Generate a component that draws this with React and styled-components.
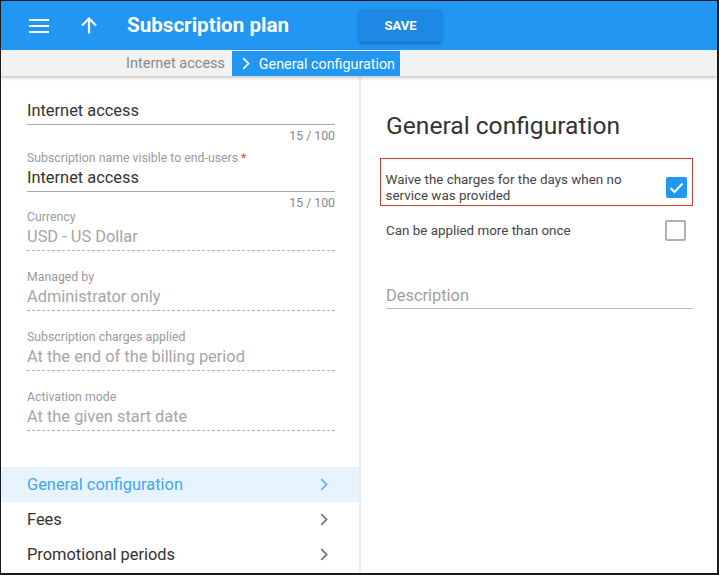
import React from 'react';
import styled, { createGlobalStyle } from 'styled-components';

const GlobalStyle = createGlobalStyle`
  html, body {
    margin: 0;
    padding: 0;
    background: #1b1b1b;
  }
  * { box-sizing: border-box; }
`;

const fields = [
  { label: 'Currency', value: 'USD - US Dollar' },
  { label: 'Managed by', value: 'Administrator only' },
  { label: 'Subscription charges applied', value: 'At the end of the billing period' },
  { label: 'Activation mode', value: 'At the given start date' },
];

const sections = ['General configuration', 'Fees', 'Promotional periods'];

const MenuIcon = () => (
  <svg width="20" height="14" viewBox="0 0 20 14">
    <rect x="0" y="0" width="20" height="2" fill="#fff" />
    <rect x="0" y="6" width="20" height="2" fill="#fff" />
    <rect x="0" y="12" width="20" height="2" fill="#fff" />
  </svg>
);

const UpIcon = () => (
  <svg width="18" height="17" viewBox="0 0 18 17">
    <path d="M9 16.5V2 M2 8.5 L9 1.5 L16 8.5" stroke="#fff" strokeWidth="2.2" fill="none" />
  </svg>
);

const Chevron = ({ color = '#757575', size = 12 }) => (
  <svg width={size * 0.6} height={size} viewBox="0 0 7 12">
    <path d="M1 1 L6 6 L1 11" stroke={color} strokeWidth="1.6" fill="none" />
  </svg>
);

const Check = () => (
  <svg width="15" height="12" viewBox="0 0 15 12">
    <path d="M1.5 6 L5.5 10 L13.5 1.5" stroke="#fff" strokeWidth="2" fill="none" />
  </svg>
);

const App = () => {
  return (
    <>
      <GlobalStyle />
      <Frame>
        <Header>
          <IconButton><MenuIcon /></IconButton>
          <IconButton up><UpIcon /></IconButton>
          <Title>Subscription plan</Title>
          <SaveButton>SAVE</SaveButton>
        </Header>
        <Breadcrumbs>
          <Crumb>Internet access</Crumb>
          <CurrentCrumb>
            <Chevron color="#fff" size={13} />
            General configuration
          </CurrentCrumb>
        </Breadcrumbs>
        <Body>
          <LeftPanel>
            <Form>
              <TextField first>
                <Value>Internet access</Value>
              </TextField>
              <Counter>15 / 100</Counter>
              <TextField>
                <Label>Subscription name visible to end-users <Req>*</Req></Label>
                <Value>Internet access</Value>
              </TextField>
              <Counter>15 / 100</Counter>
              {fields.map((f, i) => (
                <SelectField key={f.label} first={i === 0}>
                  <Label>{f.label}</Label>
                  <Value disabled>{f.value}</Value>
                </SelectField>
              ))}
            </Form>
            <Nav>
              {sections.map((s, i) => (
                <NavItem key={s} active={i === 0}>
                  {s}
                  <Chevron color={i === 0 ? '#64b5f6' : '#757575'} size={13} />
                </NavItem>
              ))}
            </Nav>
          </LeftPanel>
          <RightPanel>
            <Heading>General configuration</Heading>
            <OptionRow highlighted>
              <OptionText>Waive the charges for the days when no service was provided</OptionText>
              <CheckBox checked><Check /></CheckBox>
            </OptionRow>
            <OptionRow>
              <OptionText>Can be applied more than once</OptionText>
              <CheckBox />
            </OptionRow>
            <Description>Description</Description>
          </RightPanel>
        </Body>
      </Frame>
    </>
  );
};

const Frame = styled.div`
  width: 719px;
  height: 575px;
  border-style: solid;
  border-color: #1b1b1b;
  border-width: 1px 2px 2px 1px;
  background: #fff;
  display: flex;
  flex-direction: column;
  overflow: hidden;
  font-family: Roboto, "Liberation Sans", sans-serif;
`;

const Header = styled.div`
  height: 49px;
  background: #2196f3;
  display: flex;
  align-items: center;
  flex-shrink: 0;
`;

const IconButton = styled.div`
  display: flex;
  align-items: center;
  margin-left: ${({ up }) => (up ? '31px' : '28px')};
  margin-top: ${({ up }) => (up ? '-1px' : '0')};
`;

const Title = styled.div`
  margin-left: 29px;
  color: #fff;
  font-size: 20.6px;
  font-weight: 700;
  margin-top: -1px;
`;

const SaveButton = styled.button`
  margin-left: 70px;
  margin-top: -1px;
  width: 83px;
  height: 33px;
  border: none;
  border-radius: 2px;
  background: #1e88e5;
  color: #fff;
  font-family: Roboto, "Liberation Sans", sans-serif;
  font-weight: 700;
  font-size: 13px;
  box-shadow: 0 2px 3px rgba(0, 0, 0, 0.25);
`;

const Breadcrumbs = styled.div`
  height: 26px;
  background: #f2f2f2;
  display: flex;
  align-items: flex-end;
  padding-left: 125px;
  box-shadow: 0 2px 3px rgba(0, 0, 0, 0.22);
  position: relative;
  z-index: 1;
  flex-shrink: 0;
`;

const Crumb = styled.div`
  color: #8a8a8a;
  font-size: 14.5px;
  height: 25px;
  line-height: 25px;
  padding-right: 7px;
`;

const CurrentCrumb = styled.div`
  background: #2196f3;
  color: #fff;
  font-size: 14.3px;
  height: 25px;
  display: flex;
  align-items: center;
  gap: 9px;
  padding: 0 5px 0 10px;
`;

const Body = styled.div`
  flex: 1;
  display: flex;
  min-height: 0;
`;

const LeftPanel = styled.div`
  width: 360px;
  border-right: 2px solid #ececec;
  display: flex;
  flex-direction: column;
  justify-content: space-between;
`;

const Form = styled.div`
  padding: 25px 24px 0 26px;
  display: flex;
  flex-direction: column;
`;

const TextField = styled.div`
  display: flex;
  flex-direction: column;
  border-bottom: 1px solid #a8a8a8;
  padding-bottom: 3px;
  margin-top: ${({ first }) => (first ? '0' : '8px')};
`;

const SelectField = styled.div`
  display: flex;
  flex-direction: column;
  border-bottom: 1px dashed #b4b4b4;
  padding-bottom: 3px;
  margin-top: ${({ first }) => (first ? '0' : '19px')};
`;

const Label = styled.div`
  font-size: 12.3px;
  line-height: 14px;
  color: #9a9a9a;
  margin-bottom: 3px;
`;

const Req = styled.span`
  color: #f44336;
`;

const Value = styled.div`
  font-size: 16.4px;
  line-height: 20px;
  color: ${({ disabled }) => (disabled ? '#a6a6a6' : '#333')};
`;

const Counter = styled.div`
  font-size: 12.3px;
  line-height: 14px;
  color: #8a8a8a;
  text-align: right;
  margin-top: 4px;
`;

const Nav = styled.div`
  display: flex;
  flex-direction: column;
  padding-bottom: 1px;
`;

const NavItem = styled.div`
  height: 35px;
  display: flex;
  align-items: center;
  justify-content: space-between;
  padding: 0 31px 0 26px;
  font-size: 16.4px;
  color: ${({ active }) => (active ? '#42a5f5' : '#333')};
  background: ${({ active }) => (active ? '#e8f4fd' : 'transparent')};
`;

const RightPanel = styled.div`
  flex: 1;
  padding: 35px 24px 0 25px;
  display: flex;
  flex-direction: column;
`;

const Heading = styled.div`
  font-size: 24.6px;
  line-height: 30px;
  color: #333;
  margin-bottom: 17px;
`;

const OptionRow = styled.div`
  display: flex;
  align-items: center;
  justify-content: space-between;
  margin: ${({ highlighted }) => (highlighted ? '0 0 0 -6px' : '0')};
  padding: ${({ highlighted }) => (highlighted ? '12.5px 5.5px 1.5px 4.5px' : '14px 7px 0 0')};
  border: ${({ highlighted }) => (highlighted ? '1.5px solid #c8412c' : 'none')};
`;

const OptionText = styled.div`
  font-size: 13.4px;
  line-height: 16px;
  color: #444;
  width: 250px;
`;

const CheckBox = styled.div`
  width: 21px;
  height: 21px;
  border-radius: 2px;
  flex-shrink: 0;
  display: flex;
  align-items: center;
  justify-content: center;
  background: ${({ checked }) => (checked ? '#2196f3' : '#fff')};
  border: ${({ checked }) => (checked ? 'none' : '2px solid #b0b0b0')};
`;

const Description = styled.div`
  margin-top: 45px;
  font-size: 16.4px;
  line-height: 20px;
  color: #9e9e9e;
  padding-bottom: 2px;
  border-bottom: 1px solid #bdbdbd;
`;

export default App;
